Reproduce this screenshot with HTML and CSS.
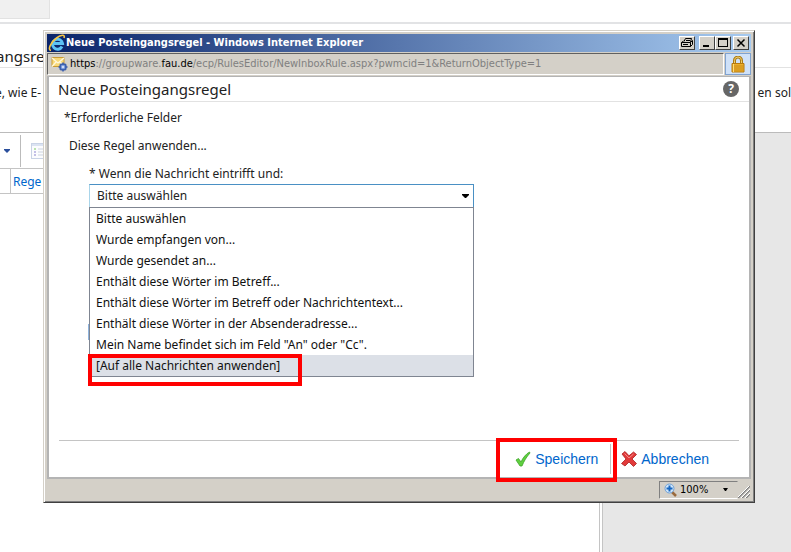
FILE: index.html
```html
<!DOCTYPE html>
<html lang="de">
<head>
    <meta charset="UTF-8">
    <meta name="viewport" content="width=device-width, initial-scale=1.0">
    <title>Neue Posteingangsregel</title>
    <link rel="stylesheet" href="styles.css">
</head>
<body>
    <!-- page behind the popup -->
    <div class="page">
        <div class="page-tabs"><div class="page-tab"></div></div>
        <h2 class="page-title">angsre</h2>
        <div class="page-intro">
            <span>e, wie E-</span>
            <span>en sol</span>
        </div>
        <div class="page-main">
            <div class="rules">
                <div class="rules-toolbar">
                    <svg class="tool-arrow" width="6" height="4" viewBox="0 0 6 4"><path d="M0 0h6v1L3 4 0 1z" fill="#2a4f9c"/></svg>
                    <span class="tool-sep"></span>
                    <svg width="16" height="16" viewBox="0 0 16 16">
                        <rect x="0.5" y="0.5" width="15" height="15" fill="#fbfcfe" stroke="#c9d3e6"/>
                        <path d="M1 2h14" stroke="#dbe3f2" stroke-width="2"/>
                        <path d="M3 5h2v2H3z" fill="#b9e3ae"/>
                        <path d="M3 8h2v2H3zM3 11h2v2H3z" fill="#c3bfe6"/>
                        <path d="M7 6h7M7 9h7M7 12h7" stroke="#ccd3e0"/>
                    </svg>
                </div>
                <div class="rules-head">
                    <span class="rules-check"></span>
                    <a href="#">Rege</a>
                </div>
            </div>
            <div class="details"></div>
        </div>
    </div>

    <!-- popup window -->
    <div class="window">
        <div class="titlebar">
            <svg width="18" height="18" viewBox="0 0 18 18">
                <path d="M14 12.500A5 5 0 1 1 14.500 9.500H6" fill="none" stroke="#5cc3f5" stroke-width="3"/>
                <path d="M3 16.500C-1 16 3 8 8.500 4 13 .5 17.500 0 16 4" fill="none" stroke="#f6c544" stroke-width="1.600"/>
            </svg>
            <h1>Neue Posteingangsregel - Windows Internet Explorer</h1>
            <button class="win-btn print" aria-label="Drucken">
                <svg width="14" height="12" viewBox="0 0 14 12"><path d="M4 4.500L5.500 1.500h6L10.500 5M1.500 5.500h9v4h-9zM1.500 5.500L3.500 4M10.500 5.500l2-2v4l-2 2M3 7.500h5M6 3.500h4" fill="none" stroke="#000"/></svg>
            </button>
            <button class="win-btn" aria-label="Minimieren">
                <svg width="12" height="12" viewBox="0 0 12 12"><path d="M2 8h6v2H2z"/></svg>
            </button>
            <button class="win-btn" aria-label="Maximieren">
                <svg width="12" height="12" viewBox="0 0 12 12"><path d="M1 1h10v9H1zM2 3v6h8V3z" fill-rule="evenodd"/></svg>
            </button>
            <button class="win-btn close" aria-label="Schließen">
                <svg width="12" height="12" viewBox="0 0 12 12"><path d="M2.500 2.500l7 7M9.500 2.500l-7 7" stroke="#000" stroke-width="1.500"/></svg>
            </button>
        </div>

        <div class="addressbar">
            <div class="address">
                <svg width="17" height="16" viewBox="0 0 17 16">
                    <path d="M1 1.500h12v9H1z" fill="#f9d978" stroke="#c99b34"/>
                    <path d="M1 2l6 5 6-5M1 10.500l4.500-5M13 10.500l-4.500-5" fill="none" stroke="#fff8dc" stroke-width="1.300"/>
                    <circle cx="12" cy="11" r="3" fill="#7f9fe0" stroke="#3c5fae" stroke-width="1.500"/>
                    <path d="M12 6.500v2M12 13.500v2M7.500 11h2M14.500 11h2M9 8l1 1M15 8l-1 1M9 14l1-1M15 14l-1-1" stroke="#3c5fae" stroke-width="1.500"/>
                    <circle cx="12" cy="11" r="1" fill="#e9effc"/>
                </svg>
                <span><b>https</b>://groupware.<b>fau.de</b>/ecp/RulesEditor/NewInboxRule.aspx?pwmcid=1&amp;ReturnObjectType=1</span>
            </div>
            <button class="lock" aria-label="Sicherheitsbericht">
                <svg width="14" height="17" viewBox="0 0 14 17">
                    <path d="M3.500 9V4.500a3.500 3.500 0 0 1 7 0V9" fill="none" stroke="#a97a18" stroke-width="3"/>
                    <path d="M3.500 9V4.500a3.500 3.500 0 0 1 7 0V9" fill="none" stroke="#f3cf68"/>
                    <path d="M1 7.500h12v8.500H1z" fill="#edaf2a" stroke="#b67a0e"/>
                    <path d="M1.500 10h11M1.500 12h11M1.500 14h11" stroke="#c98c18"/>
                    <path d="M2.500 8v8" stroke="#ffdd7a"/>
                </svg>
            </button>
        </div>

        <form class="dialog">
            <div class="dialog-head">
                <h2>Neue Posteingangsregel</h2>
                <button type="button" class="help" aria-label="Hilfe">?</button>
            </div>

            <div class="dialog-body">
                <p class="required">*Erforderliche Felder</p>
                <p class="apply">Diese Regel anwenden...</p>
                <div class="field">
                    <label for="condition">* Wenn die Nachricht eintrifft und:</label>
                    <div class="combo">
                        <select id="condition">
                            <option>Bitte auswählen</option>
                        </select>
                        <svg class="combo-arrow" width="7" height="4" viewBox="0 0 7 4"><path d="M0 0h7v1L4 4H3L0 1z"/></svg>
                        <ul class="menu" role="listbox" aria-label="Bedingung">
                            <li role="option">Bitte auswählen</li>
                            <li role="option">Wurde empfangen von...</li>
                            <li role="option">Wurde gesendet an...</li>
                            <li role="option">Enthält diese Wörter im Betreff...</li>
                            <li role="option">Enthält diese Wörter im Betreff oder Nachrichtentext...</li>
                            <li role="option">Enthält diese Wörter in der Absenderadresse...</li>
                            <li role="option">Mein Name befindet sich im Feld "An" oder "Cc".</li>
                            <li role="option" class="active" aria-selected="true">[Auf alle Nachrichten anwenden]<span class="mark mark-option"></span></li>
                        </ul>
                    </div>
                    <div class="more"></div>
                </div>
            </div>

            <div class="dialog-foot">
                <div class="save">
                    <button type="submit">
                        <svg width="16" height="16" viewBox="0 0 16 16"><path d="M1 9l2.500-1.500L6 11C8 6.500 11 3 14.500 1l.5 1C11.500 6 9 10 7 15H5z" fill="#5fd03f" stroke="#3fa52a" stroke-width="0.800"/></svg>
                        Speichern
                    </button>
                    <span class="mark mark-save"></span>
                </div>
                <button type="button" class="cancel">
                    <svg width="16" height="16" viewBox="0 0 16 16"><path d="M1 3l3-2.500 4 4.300L12.500 1 15.500 3.500 11 8l4.500 4.500-3 3L8 11l-4 4-3.500-2.500L5 8z" fill="#e23a3a" stroke="#a92020" stroke-width="0.800"/><path d="M3.500 2.500L8 7l4.500-4" fill="none" stroke="#f58a8a"/></svg>
                    Abbrechen
                </button>
            </div>
        </form>

        <div class="statusbar">
            <button class="zoom">
                <svg width="13" height="14" viewBox="0 0 13 14">
                    <path d="M8 9l4 4" stroke="#9a6a3c" stroke-width="2.500"/>
                    <circle cx="5.500" cy="5.500" r="4.500" fill="#cfe6fb" stroke="#6fa0d6"/>
                    <path d="M5.500 2.500v6M2.500 5.500h6" stroke="#1766c0" stroke-width="2"/>
                </svg>
                <span>100%</span>
                <svg class="zoom-arrow" width="5" height="3" viewBox="0 0 5 3"><path d="M0 0h5L3 3H2z"/></svg>
            </button>
            <svg class="grip" width="12" height="12" viewBox="0 0 12 12">
                <path d="M0 12L12 0M4 12l8-8M8 12l4-4" stroke="#808080" stroke-width="1.500"/>
                <path d="M-1 12L12-1M3 12l9-9M7 12l5-5" stroke="#fff"/>
            </svg>
        </div>
    </div>
</body>
</html>
```
FILE: styles.css
```css
* {
    margin: 0;
    padding: 0;
    box-sizing: border-box;
}

body {
    font-family: 'Noto Sans', 'Open Sans', sans-serif;
    font-size: 12px;
    color: #222;
    background: #fff;
    overflow: hidden;
}

button {
    font: inherit;
    border: none;
    background: none;
    cursor: pointer;
}

svg {
    display: block;
    flex: none;
}

/* page in the background */
.page {
    display: flex;
    flex-direction: column;
    height: 100vh;
}

.page-tabs {
    height: 24px;
    border-bottom: 2px solid #e2e3e5;
}

.page-tab {
    width: 50px;
    height: 19px;
    background: #f0f0f0;
    border-right: 1px solid #e2e2e2;
    border-bottom: 1px solid #e2e2e2;
}

.page-title {
    height: 44px;
    padding-top: 22px;
    font-size: 15px;
    font-weight: 400;
    line-height: 20px;
    text-indent: -4px;
    border-bottom: 1px solid #e2e2e2;
}

.page-intro {
    display: flex;
    justify-content: space-between;
    height: 64px;
    margin-left: -5px;
    padding-top: 16px;
    line-height: 18px;
}

.page-main {
    flex: 1;
    display: flex;
    border-top: 1px solid #bbb;
}

.rules {
    flex: 1;
    border-right: 1px solid #c4c4c4;
}

.rules-toolbar {
    display: flex;
    align-items: center;
    gap: 10px;
    height: 35px;
    padding-left: 4px;
}

.tool-sep {
    width: 1px;
    height: 32px;
    background: #bbb;
}

.rules-head {
    display: flex;
    height: 26px;
    border-top: 1px solid #c4c4c4;
    border-bottom: 1px solid #c4c4c4;
    line-height: 26px;
}

.rules-head a {
    padding-left: 2px;
    color: #0066cc;
    text-decoration: none;
}

.rules-check {
    width: 11px;
    border-right: 1px solid #c4c4c4;
}

.details {
    width: 189px;
    margin-left: 2px;
    background: #e7e7e7;
    border-left: 1px solid #c4c4c4;
}

/* popup window */
.window {
    position: absolute;
    inset: 30px 36px 49px 43px;
    display: flex;
    flex-direction: column;
    padding: 2px;
    background: #d4d0c8;
    border: 1px solid;
    border-color: #d4d0c8 #404040 #404040 #d4d0c8;
    box-shadow: inset 1px 1px #fff, inset -1px -1px #808080;
}

.titlebar {
    display: flex;
    align-items: center;
    height: 18px;
    margin: 1px 1px 0;
    padding: 0 2px 0 1px;
    background: linear-gradient(90deg, #0a246a, #a6caf0);
}

.titlebar h1 {
    flex: 1;
    font-family: 'DejaVu Sans Condensed', 'DejaVu Sans', sans-serif;
    font-size: 11px;
    font-weight: 700;
    line-height: 14px;
    color: #fff;
}

.win-btn {
    display: flex;
    align-items: center;
    justify-content: center;
    width: 16px;
    height: 14px;
    background: #d4d0c8;
    border: 1px solid;
    border-color: #fff #404040 #404040 #fff;
}

.win-btn.print {
    margin-right: 4px;
}

.win-btn.close {
    margin-left: 2px;
}

.addressbar {
    display: flex;
    height: 22px;
    margin: 1px 1px 0;
}

.address {
    flex: 1;
    display: flex;
    align-items: center;
    gap: 2px;
    padding-left: 3px;
    font-family: 'DejaVu Sans Condensed', 'DejaVu Sans', sans-serif;
    font-size: 11px;
    line-height: 14px;
    color: #808080;
    white-space: nowrap;
    border: 1px solid;
    border-color: #606060 #fff #fff #606060;
}

.address b {
    font-weight: 400;
    color: #000;
}

.lock {
    display: flex;
    align-items: center;
    justify-content: center;
    width: 26px;
    margin-left: 1px;
    background: #cfe1f8;
    border: 1px solid #7fa2d0;
}

.dialog {
    flex: 1;
    display: flex;
    flex-direction: column;
    margin: 1px 1px 0;
    background: #fff;
    border: 2px solid #b4b4b4;
    border-top-width: 1px;
}

.dialog-head {
    display: flex;
    align-items: center;
    justify-content: space-between;
    height: 25px;
    padding: 0 10px 0 9px;
    border-bottom: 1px solid #e2e2e2;
}

.dialog-head h2 {
    font-size: 15px;
    font-weight: 400;
    line-height: 20px;
}

.help {
    width: 16px;
    height: 16px;
    border-radius: 50%;
    background: #666;
    color: #fff;
    font-weight: 700;
    line-height: 16px;
}

.dialog-body {
    flex: 1;
    padding: 6px 15px 0;
    line-height: 20px;
}

.apply {
    margin: 8px 0 8px 5px;
}

.field {
    margin-left: 25px;
}

.field label {
    display: block;
}

.combo {
    position: relative;
    width: 385px;
}

.combo select {
    display: block;
    width: 100%;
    height: 24px;
    padding-left: 7px;
    appearance: none;
    font: inherit;
    color: #222;
    background: #fff;
    border: 1px solid;
    border-color: #4a90c4 #4a90c4 #a9d5ea #a9d5ea;
    border-radius: 0;
}

.combo-arrow {
    position: absolute;
    top: 10px;
    right: 5px;
}

.menu {
    position: absolute;
    top: 23px;
    left: 0;
    right: 0;
    list-style: none;
    color: #111;
    background: #fff;
    border: 1px solid #7f8591;
}

.menu li {
    padding-left: 6px;
    line-height: 21px;
}

.menu .active {
    position: relative;
    background: #dce0e7;
}

/* hint frames */
.mark {
    position: absolute;
    border: 4px solid #f00;
    pointer-events: none;
}

.mark-option {
    top: -1px;
    left: -2px;
    width: 214px;
    height: 32px;
}

.mark-save {
    inset: -3px -6px -5px 0;
}

.more {
    width: 40px;
    height: 16px;
    margin: 116px 0 0 -1px;
    background: #8fb3dc;
}

.dialog-foot {
    display: flex;
    justify-content: flex-end;
    margin: 0 10px;
    padding-right: 25px;
    border-top: 1px solid #c4c4c4;
}

.dialog-foot button {
    display: flex;
    align-items: center;
    gap: 4px;
    font-family: 'Liberation Sans', Arial, sans-serif;
    font-size: 14px;
    color: #0066cc;
}

.save {
    position: relative;
    display: flex;
    align-items: center;
    height: 36px;
    padding-left: 19px;
}

.save button {
    height: 30px;
    padding-right: 12px;
    border-right: 1px solid #c4c4c4;
}

.cancel {
    height: 36px;
    padding: 0 5px 0 10px;
}

.statusbar {
    display: flex;
    align-items: center;
    justify-content: flex-end;
    height: 21px;
    padding-right: 2px;
}

.zoom {
    display: flex;
    align-items: center;
    gap: 3px;
    width: 79px;
    height: 18px;
    padding: 0 9px 0 4px;
    font-family: 'DejaVu Sans Condensed', 'DejaVu Sans', sans-serif;
    font-size: 11px;
    border: 1px solid;
    border-color: #808080 transparent #fff #808080;
}

.zoom-arrow {
    margin-left: auto;
}

.grip {
    align-self: flex-end;
    margin: 0 0 2px;
}
```
